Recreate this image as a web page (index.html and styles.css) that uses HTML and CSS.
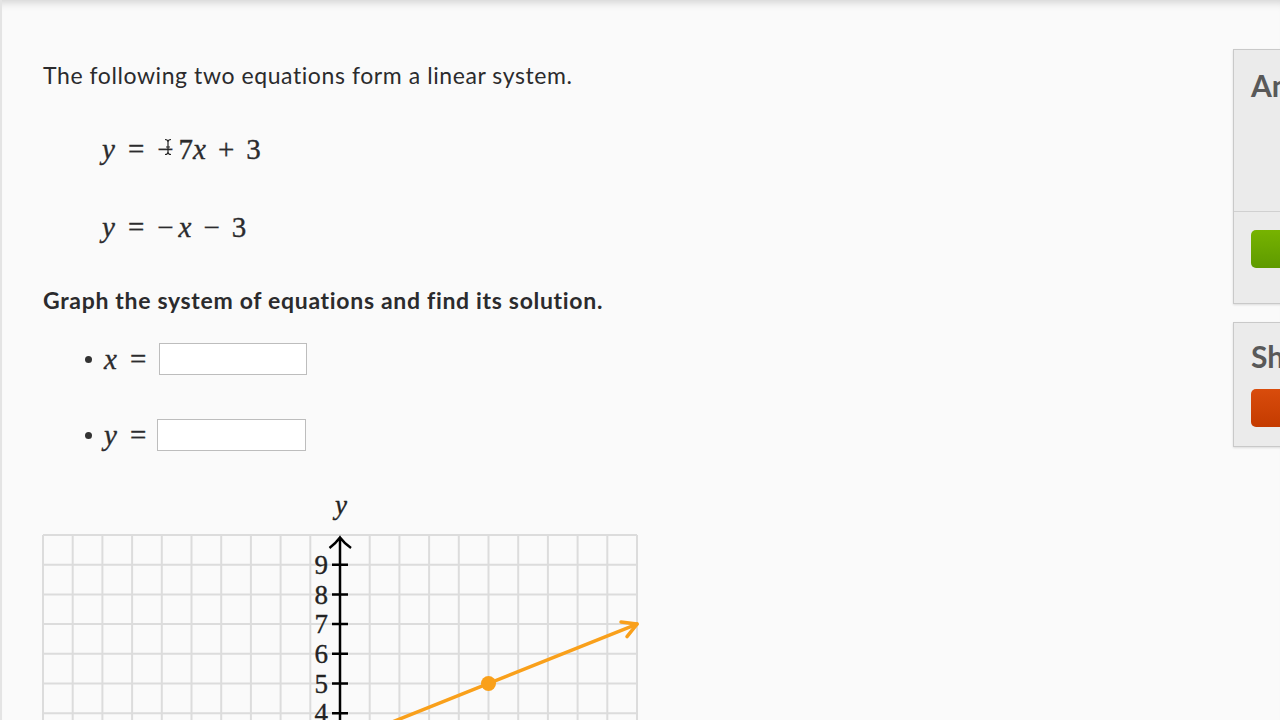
FILE: index.html
```html
<!DOCTYPE html>
<html>
<head>
<meta charset="utf-8">
<link rel="stylesheet" href="styles.css">
</head>
<body>
<div class="page">
  <main class="exercise">
    <p class="intro">The following two equations form a linear system.</p>
    <div class="equations">
      <div class="eq"><span class="v">y</span><span class="rel">=</span><span class="neg">−</span><span>7</span><span class="v">x</span><span class="bin">+</span><span>3</span>
        <svg class="cursor" width="10" height="18" viewBox="0 0 10 18"><path d="M2 1.5 Q5 1.5 5 4 V14 Q5 16.5 2 16.5 M8 1.5 Q5 1.5 5 4 M5 14 Q5 16.5 8 16.5 M3 9 H7" fill="none" stroke="#222" stroke-width="1.2"/></svg>
      </div>
      <div class="eq"><span class="v">y</span><span class="rel">=</span><span class="neg">−</span><span class="v">x</span><span class="bin">−</span><span>3</span></div>
    </div>
    <p class="question">Graph the system of equations and find its solution.</p>
    <ul class="answers">
      <li><span class="v">x</span><span class="rel">=</span><input class="box" type="text"></li>
      <li><span class="v">y</span><span class="rel">=</span><input class="box box-y" type="text"></li>
    </ul>
    <svg class="graph" width="600" height="660" viewBox="0 0 600 660">
      <text class="axis-label" x="301" y="29" text-anchor="middle">y</text>
      <path class="grid" d="M3 50V644M32.7 50V644M62.4 50V644M92.1 50V644M121.8 50V644M151.5 50V644M181.2 50V644M210.9 50V644M240.6 50V644M270.3 50V644M300 50V644M329.7 50V644M359.4 50V644M389.1 50V644M418.8 50V644M448.5 50V644M478.2 50V644M507.9 50V644M537.6 50V644M567.3 50V644M597 50V644M3 50H597M3 79.7H597M3 109.4H597M3 139.1H597M3 168.8H597M3 198.5H597M3 228.2H597M3 257.9H597M3 287.6H597M3 317.3H597M3 347H597M3 376.7H597M3 406.4H597M3 436.1H597M3 465.8H597M3 495.5H597M3 525.2H597M3 554.9H597M3 584.6H597M3 614.3H597M3 644H597"/>
      <path class="axis" d="M300 53V642M289.5 63 Q296 58 300 52.5 Q304 58 311 63M292 79.7H308M292 109.4H308M292 139.1H308M292 168.8H308M292 198.5H308M292 228.2H308M292 257.9H308M292 287.6H308M292 317.3H308M292 376.7H308M292 406.4H308M5 347H595"/>
      <g class="ticks">
        <text x="288" y="89">9</text>
        <text x="288" y="118.7">8</text>
        <text x="288" y="148.4">7</text>
        <text x="288" y="178">6</text>
        <text x="288" y="207.7">5</text>
        <text x="288" y="237.4">4</text>
        <text x="288" y="267">3</text>
        <text x="288" y="296.7">2</text>
        <text x="288" y="326.4">1</text>
      </g>
      <path class="line" d="M3 376.7 L597 139.1"/>
      <path class="line" d="M581 136.9 L597 139.1 L587 151.7"/>
      <circle class="pt" cx="448.5" cy="198.5" r="7.5"/>
      <circle class="pt" cx="300" cy="257.9" r="7.5"/>
    </svg>
  </main>
  <aside class="sidebar">
    <section class="panel answer-panel">
      <div class="panel-top"><h2 class="panel-title">Answer</h2></div>
      <div class="panel-bottom"><button class="btn btn-green">Check Answer</button></div>
    </section>
    <section class="panel hint-panel">
      <h2 class="panel-title">Show hints</h2>
      <button class="btn btn-red">Get a hint</button>
    </section>
  </aside>
</div>
</body>
</html>
```
FILE: styles.css
```css
* { box-sizing: border-box; }
html, body { margin: 0; padding: 0; }
body {
  width: 1280px;
  height: 720px;
  overflow: hidden;
  background: #fafafa;
  font-family: "Lato", "Liberation Sans", sans-serif;
  color: #2b2b2d;
}
.page {
  display: flex;
  height: 720px;
  border-left: 2px solid #e4e4e4;
  box-shadow: inset 0 10px 10px -8px rgba(0,0,0,0.18);
}
.exercise {
  width: 1231px;
  flex-shrink: 0;
  padding: 60px 0 0 41px;
}
.intro {
  margin: 0;
  font-size: 23px;
  letter-spacing: 0.58px;
  line-height: 30px;
}
.equations { margin-top: 39px; padding-left: 59px; }
.eq {
  position: relative;
  height: 40px;
  line-height: 40px;
  font-family: "Liberation Serif", serif;
  font-size: 29px;
  -webkit-text-stroke: 0.35px #2b2b2d;
  margin-bottom: 38px;
  white-space: nowrap;
}
.v { font-style: italic; }
.rel { margin: 0 13px; }
.neg { margin-right: 5px; }
.bin { margin: 0 12px; }
.cursor { position: absolute; left: 61px; top: 9px; }
.question {
  margin: 1px 0 0;
  font-size: 23px;
  font-weight: 700;
  letter-spacing: 0.68px;
  line-height: 30px;
}
.answers {
  list-style: none;
  margin: 28px 0 0;
  padding: 0 0 0 42px;
}
.answers li {
  display: flex;
  align-items: center;
  height: 32px;
  font-family: "Liberation Serif", serif;
  font-size: 29px;
  -webkit-text-stroke: 0.35px #2b2b2d;
  margin-bottom: 44px;
}
.answers li::before {
  content: "";
  width: 7px;
  height: 7px;
  border-radius: 50%;
  background: #333;
  margin-right: 12px;
}
.answers .rel { margin: 0 13px 0 13px; }
.box {
  width: 148px;
  height: 32px;
  border: 1px solid #bdbdbd;
  background: #fff;
  margin: 0;
}
.box-y { margin-left: -2px; width: 149px; }
.graph { display: block; margin: -10px 0 0 -3px; }
.grid { stroke: #dcdcdc; stroke-width: 2; fill: none; }
.axis { stroke: #000; stroke-width: 2.5; fill: none; }
.axis-label { font-family: "Liberation Serif", serif; font-style: italic; font-size: 27px; fill: #222; stroke: #222; stroke-width: 0.35px; }
.ticks text { font-family: "Liberation Serif", serif; font-size: 27px; fill: #222; stroke: #222; stroke-width: 0.35px; text-anchor: end; }
.line { stroke: #f9a01b; stroke-width: 3.5; fill: none; stroke-linecap: round; stroke-linejoin: round; }
.pt { fill: #f9a01b; }
.sidebar {
  width: 300px;
  flex-shrink: 0;
  padding-top: 49px;
}
.panel {
  background: #ebebeb;
  border: 1px solid #c9c9c9;
  box-shadow: 0 1px 2px rgba(0,0,0,0.12);
  margin-bottom: 18px;
}
.answer-panel { height: 255px; display: flex; flex-direction: column; }
.panel-top { height: 162px; border-bottom: 1px solid #d0d0d0; padding: 17px 0 0 17px; }
.panel-bottom { padding: 18px 0 0 17px; }
.panel-title {
  margin: 0;
  font-family: "Lato", "Liberation Sans", sans-serif;
  font-size: 30px;
  font-weight: 700;
  color: #595959;
  line-height: 36px;
}
.hint-panel { height: 125px; padding: 15px 0 0 17px; }
.hint-panel .btn { margin-top: 15px; }
.btn {
  display: block;
  width: 230px;
  height: 38px;
  border: none;
  border-radius: 5px;
  color: #fff;
  font-family: "Lato", sans-serif;
  font-size: 16px;
  font-weight: 700;
}
.btn-green { background: linear-gradient(#77b300, #5e9a00); }
.btn-red { background: linear-gradient(#d94c0c, #c43b00); }
```
